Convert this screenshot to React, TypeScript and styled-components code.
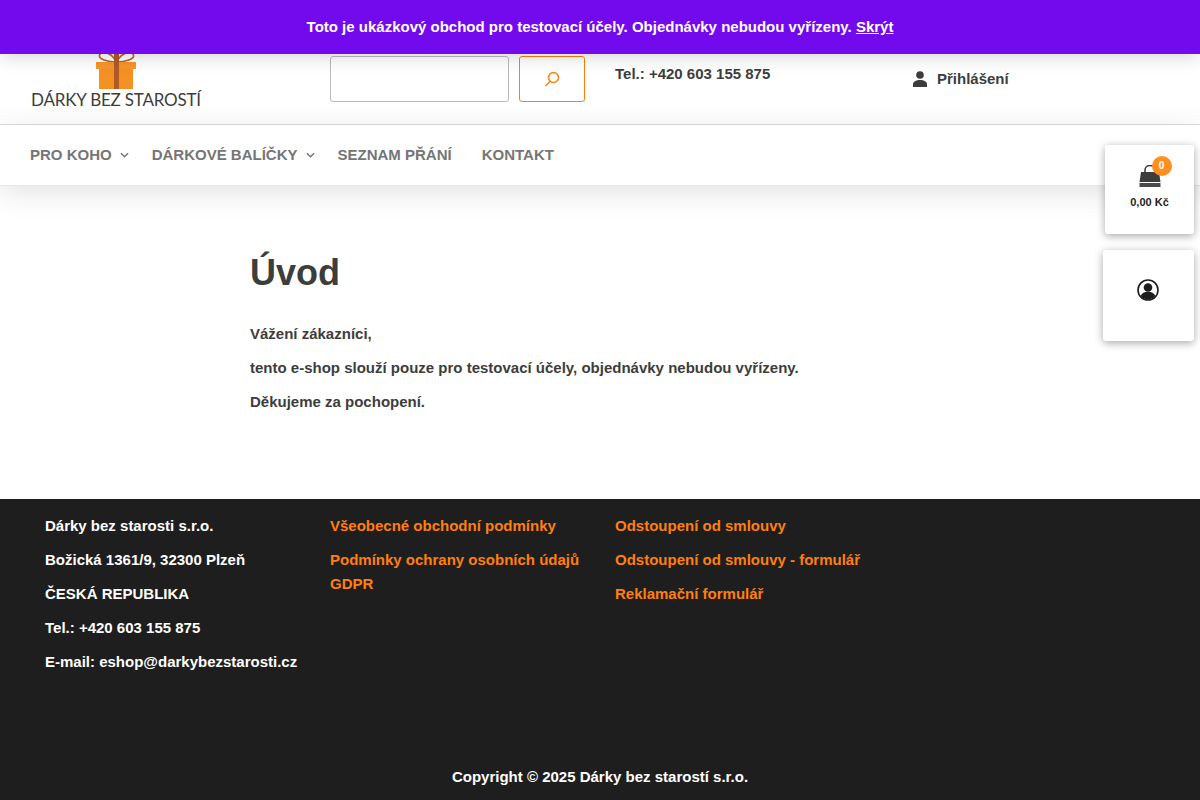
import React from 'react';
import styled, { createGlobalStyle } from 'styled-components';

const GlobalStyle = createGlobalStyle`
  html, body {
    margin: 0;
    padding: 0;
    background: #fff;
    font-family: 'Liberation Sans', Arial, sans-serif;
  }
  * {
    box-sizing: border-box;
  }
`;

const Page = styled.div`
  position: relative;
  width: 1200px;
  height: 800px;
  overflow: hidden;
  display: flex;
  flex-direction: column;
`;

const Notice = styled.div`
  position: absolute;
  top: 0;
  left: 0;
  right: 0;
  z-index: 5;
  height: 54px;
  background: #730aee;
  box-shadow: 0 1px 20px rgba(0, 0, 0, 0.2);
  color: #fff;
  font: 700 15px/54px 'Liberation Sans', sans-serif;
  text-align: center;
`;

const NoticeLink = styled.a`
  color: #fff;
  text-decoration: underline;
`;

const HeaderTop = styled.div`
  height: 125px;
  padding-left: 30px;
  border-bottom: 1px solid #ddd;
  display: grid;
  grid-template-columns: 300px 285px 285px 1fr;
`;

const Logo = styled.div`
  width: 172px;
  margin-top: 46px;
  display: flex;
  flex-direction: column;
  align-items: center;
`;

const LogoGift = styled.svg`
  flex: none;
`;

const LogoName = styled.div`
  font: 400 17px/20px Lato, sans-serif;
  letter-spacing: -0.2px;
  color: #3d3d3d;
  white-space: nowrap;
  margin-top: 1px;
`;

const SearchForm = styled.div`
  display: flex;
  gap: 10px;
  padding-top: 56px;
`;

const SearchInput = styled.input`
  width: 179px;
  height: 46px;
  border: 1px solid #bbb;
  border-radius: 3px;
  background: #fff;
`;

const SearchButton = styled.button`
  width: 66px;
  height: 46px;
  border: 1px solid #ff7f0e;
  border-radius: 3px;
  background: #fff;
  padding: 0;
  display: flex;
  align-items: center;
  justify-content: center;
`;

const Phone = styled.div`
  padding-top: 62px;
  font: 700 15px/24px 'Liberation Sans', sans-serif;
  color: #3d3d3d;
`;

const Login = styled.a`
  display: flex;
  align-items: center;
  gap: 10px;
  height: 24px;
  margin-top: 67px;
  padding-left: 13px;
  font: 700 15px/24px 'Liberation Sans', sans-serif;
  color: #3d3d3d;
`;

const Nav = styled.nav`
  height: 61px;
  padding-left: 30px;
  display: flex;
  align-items: center;
  background: #fff;
  border-bottom: 1px solid #e6e6e6;
  box-shadow: 0 6px 30px rgba(0, 0, 0, 0.12);
`;

const NavItem = styled.a<{ $gap: number }>`
  display: flex;
  align-items: center;
  margin-right: ${(p) => p.$gap}px;
  font: 700 15px/24px 'Liberation Sans', sans-serif;
  text-transform: uppercase;
  color: #757575;
`;

const Chevron = styled.svg`
  margin-left: 8px;
`;

const Main = styled.main`
  flex: 1;
  padding: 65px 0 0 250px;
`;

const Title = styled.h1`
  margin: 0 0 27px;
  font: 700 36px/44px 'Liberation Sans', sans-serif;
  color: #3d3d3d;
`;

const Para = styled.p`
  margin: 0 0 10px;
  font: 700 15px/24px 'Liberation Sans', sans-serif;
  color: #3d3d3d;
`;

const Footer = styled.footer`
  height: 301px;
  background: #1e1e1e;
  padding: 15px 0 0 45px;
  display: flex;
  flex-direction: column;
`;

const FooterCols = styled.div`
  display: grid;
  grid-template-columns: 285px 285px 285px;
  height: 251px;
`;

const FooterCol = styled.div`
  display: flex;
  flex-direction: column;
  gap: 10px;
`;

const FooterText = styled.div`
  font: 700 15px/24px 'Liberation Sans', sans-serif;
  color: #fff;
`;

const FooterLink = styled.a`
  font: 700 15px/24px 'Liberation Sans', sans-serif;
  color: #ff7f0e;
  max-width: 260px;
`;

const Copyright = styled.div`
  margin-left: -45px;
  text-align: center;
  font: 700 15px/24px 'Liberation Sans', sans-serif;
  color: #fff;
`;

const SideCard = styled.div<{ $top: number; $width: number; $height: number }>`
  position: absolute;
  top: ${(p) => p.$top}px;
  right: 6px;
  width: ${(p) => p.$width}px;
  height: ${(p) => p.$height}px;
  z-index: 4;
  background: #fff;
  border-radius: 3px;
  box-shadow: 0 2px 8px rgba(0, 0, 0, 0.35);
  display: flex;
  flex-direction: column;
  align-items: center;
`;

const BagWrap = styled.div`
  position: relative;
  margin-top: 20px;
  height: 24px;
`;

const Badge = styled.span`
  position: absolute;
  top: -9px;
  left: 13px;
  width: 20px;
  height: 20px;
  border-radius: 50%;
  background: #ff8f1f;
  color: #fff;
  font: 700 10px/20px 'Liberation Sans', sans-serif;
  text-align: center;
`;

const CartPrice = styled.div`
  margin-top: 6px;
  font: 700 11px/14px 'Liberation Sans', sans-serif;
  color: #1e1e1e;
`;

const AccountIcon = styled.svg`
  margin: 29px 1px 0 0;
`;

const GiftIcon = () => (
  <LogoGift width="44" height="43" viewBox="0 0 44 43">
    <path d="M22.500 16C17 6 8 4 5.500 9c-1.500 4 8 7 17 7zm0 0C28 6 37 4 39.500 9c1.500 4-8 7-17 7z" fill="none" stroke="#b5622a" strokeWidth="1.600" />
    <rect x="2" y="16" width="40" height="7" fill="#f6952b" />
    <rect x="5" y="23" width="34" height="20" fill="#f39223" />
    <rect x="20" y="8" width="5" height="35" fill="#b05a28" />
  </LogoGift>
);

const SearchIcon = () => (
  <svg width="16" height="16" viewBox="0 0 16 16" fill="none" stroke="#ff7f0e" strokeWidth="1.5">
    <circle cx="9.5" cy="6.5" r="5" />
    <path d="M6 10.5L1.5 15" />
  </svg>
);

const UserIcon = () => (
  <svg width="14" height="16" viewBox="0 0 14 16" fill="#3d3d3d">
    <circle cx="7" cy="4" r="3.8" />
    <path d="M0 16v-2.5C0 10.5 3 9 7 9s7 1.5 7 4.5V16z" />
  </svg>
);

const ChevronIcon = () => (
  <Chevron width="9" height="7" viewBox="0 0 10 7" fill="none" stroke="#757575" strokeWidth="1.6">
    <path d="M1 1l4 4 4-4" />
  </Chevron>
);

const BagIcon = () => (
  <svg width="22" height="22" viewBox="0 0 22 22">
    <path d="M6 9V5a5 4.500 0 0 1 10 0v4" fill="none" stroke="#3d3d3d" strokeWidth="1.600" />
    <path d="M2 7h18l1.500 10H.5z" fill="#3d3d3d" />
    <path d="M.5 18h21v4H.5z" fill="#4a4a4a" />
  </svg>
);

const AccountGlyph = () => (
  <AccountIcon width="22" height="22" viewBox="0 0 22 22">
    <circle cx="11" cy="11" r="10" fill="none" stroke="#1e1e1e" strokeWidth="1.6" />
    <circle cx="11" cy="8.500" r="4.300" fill="#1e1e1e" />
    <path d="M3.800 17c1-3 3.600-4.200 7.200-4.200s6.200 1.200 7.200 4.200c-1.800 2.200-4.400 3.400-7.200 3.400s-5.400-1.200-7.200-3.400z" fill="#1e1e1e" />
  </AccountIcon>
);

export default function App() {
  return (
    <Page>
      <GlobalStyle />
      <Notice>
        Toto je ukázkový obchod pro testovací účely. Objednávky nebudou vyřízeny. <NoticeLink>Skrýt</NoticeLink>
      </Notice>

      <HeaderTop>
        <Logo>
          <GiftIcon />
          <LogoName>DÁRKY BEZ STAROSTÍ</LogoName>
        </Logo>
        <SearchForm>
          <SearchInput />
          <SearchButton>
            <SearchIcon />
          </SearchButton>
        </SearchForm>
        <Phone>Tel.: +420 603 155 875</Phone>
        <Login>
          <UserIcon />
          Přihlášení
        </Login>
      </HeaderTop>

      <Nav>
        <NavItem $gap={23}>
          Pro koho
          <ChevronIcon />
        </NavItem>
        <NavItem $gap={23}>
          Dárkové balíčky
          <ChevronIcon />
        </NavItem>
        <NavItem $gap={30}>Seznam přání</NavItem>
        <NavItem $gap={0}>Kontakt</NavItem>
      </Nav>

      <Main>
        <Title>Úvod</Title>
        <Para>Vážení zákazníci,</Para>
        <Para>tento e-shop slouží pouze pro testovací účely, objednávky nebudou vyřízeny.</Para>
        <Para>Děkujeme za pochopení.</Para>
      </Main>

      <Footer>
        <FooterCols>
          <FooterCol>
            <FooterText>Dárky bez starosti s.r.o.</FooterText>
            <FooterText>Božická 1361/9, 32300 Plzeň</FooterText>
            <FooterText>ČESKÁ REPUBLIKA</FooterText>
            <FooterText>Tel.: +420 603 155 875</FooterText>
            <FooterText>E-mail: eshop@darkybezstarosti.cz</FooterText>
          </FooterCol>
          <FooterCol>
            <FooterLink>Všeobecné obchodní podmínky</FooterLink>
            <FooterLink>Podmínky ochrany osobních údajů GDPR</FooterLink>
          </FooterCol>
          <FooterCol>
            <FooterLink>Odstoupení od smlouvy</FooterLink>
            <FooterLink>Odstoupení od smlouvy - formulář</FooterLink>
            <FooterLink>Reklamační formulář</FooterLink>
          </FooterCol>
        </FooterCols>
        <Copyright>Copyright © 2025 Dárky bez starostí s.r.o.</Copyright>
      </Footer>

      <SideCard $top={145} $width={89} $height={89}>
        <BagWrap>
          <BagIcon />
          <Badge>0</Badge>
        </BagWrap>
        <CartPrice>0,00 Kč</CartPrice>
      </SideCard>
      <SideCard $top={250} $width={91} $height={91}>
        <AccountGlyph />
      </SideCard>
    </Page>
  );
}
